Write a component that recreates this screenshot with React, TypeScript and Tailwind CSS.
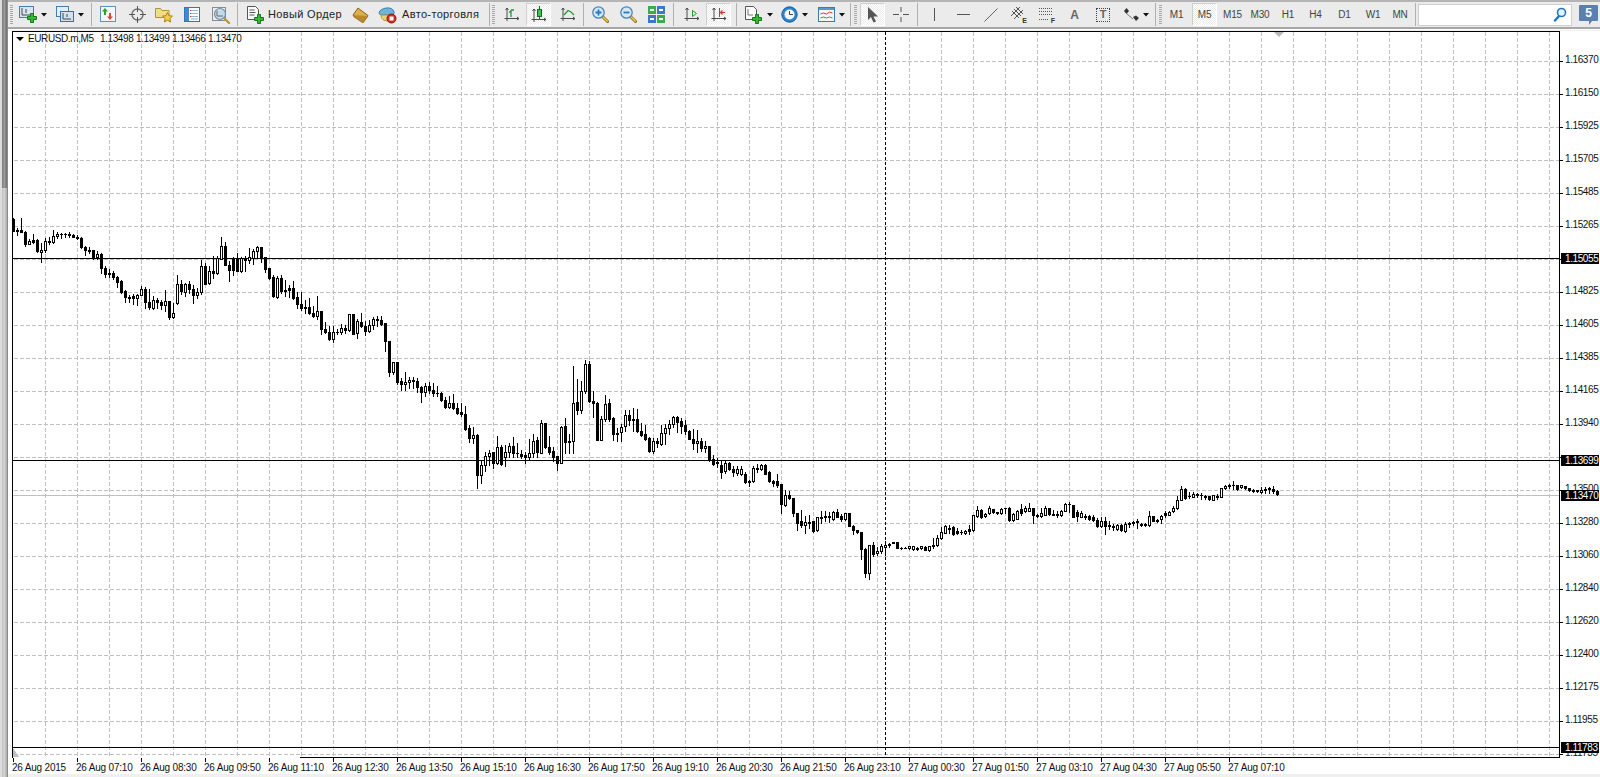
import React from "react";

type C = [number, number, number, number, number];
// [wick top, body top, body bottom, wick bottom, white?]  measured at 3x from y0
const segA: C[] = [[55,58,95,95,0],[85,91,95,107,0],[55,91,98,98,0],[95,96,135,140,0],[118,124,133,135,1],[103,122,127,132,0],[118,120,155,158,0],[130,152,158,188,1],[115,124,152,158,1],[113,124,129,133,0],[90,108,128,130,1],[98,103,110,116,1],[100,104,105,115,0],[100,104,105,113,0],[97,103,106,113,0],[103,105,112,113,0],[107,111,117,120,0],[113,115,143,145,0],[140,142,152,166,0],[143,150,154,160,0],[150,151,176,178,0],[155,162,173,178,1],[160,162,206,220,0],[200,204,225,233,0],[208,220,225,232,0],[215,219,233,238,0],[230,232,248,263,0],[240,243,278,280,0],[272,274,293,308,0],[285,291,296,308,0],[283,290,296,315,0],[283,287,296,318,1],[258,267,287,288,1],[262,267,307,325,0],[267,306,323,328,0],[290,301,325,328,1],[295,301,308,325,0],[300,307,317,328,0],[270,304,316,335,1],[303,304,353,358,0],[310,341,352,356,1],[225,252,312,314,1],[240,252,276,283,0],[250,252,278,290,1],[245,253,270,280,0],[255,267,287,312,0],[265,276,287,295,1],[180,198,278,285,1],[190,198,253,255,0],[200,214,252,254,1],[170,214,220,236,0],[170,176,221,224,1],[112,139,178,180,1],[128,139,197,198,0],[185,195,212,245,0],[172,175,212,228,0],[160,175,214,215,0],[172,175,214,218,1],[170,174,182,215,0],[145,172,183,190,1],[148,153,175,193,1],[140,142,155,175,1],[142,142,175,188,0],[172,172,210,218,0],[205,205,236,238,0],[225,233,291,292,0],[230,234,293,296,1],[225,234,276,280,0],[242,270,276,290,0],[255,266,272,292,0],[245,264,297,300,0],[278,293,313,325,0],[276,312,325,333,0],[300,322,327,342,0],[295,321,342,345,0],[320,340,351,352,0],[288,333,350,360,1],[333,333,390,403,0],[367,387,398,402,0],[378,396,420,423,0],[380,396,420,427,1],[388,396,398,405,0],[372,385,398,405,1],[375,385,393,402,0],[342,343,392,396,1],[342,344,403,405,0],[358,365,401,416,1],[340,367,380,382,0],[365,378,395,407,0],[362,376,395,398,1],[352,357,377,389,1],[350,358,361,380,0],[350,360,375,378,0],[370,371,426,455,0],[423,424,519,531,0],[486,486,519,525,1],[486,486,549,555,0]];
const segB: C[] = [[115,125,135,152,0],[98,127,135,152,1],[112,121,128,146,1],[112,120,125,147,0],[115,123,143,158,0],[140,141,158,188,0],[130,139,158,170,1],[128,138,152,160,0],[130,150,160,170,0],[140,160,162,170,0],[158,160,182,185,0],[172,180,203,205,0],[170,190,203,207,1],[162,190,206,208,0],[190,205,222,225,0],[190,218,225,230,0],[198,223,270,272,0],[255,264,297,308,0],[262,286,296,310,1],[284,285,407,447,0],[363,375,407,432,1],[338,349,376,395,1],[332,339,350,376,1],[336,336,372,386,0],[288,322,372,375,1],[316,322,373,378,0],[316,336,353,380,1],[310,318,339,352,1],[292,318,341,354,0],[310,339,341,353,0],[330,342,350,357,0],[338,346,352,372,0],[297,340,353,358,1],[284,304,341,352,1],[292,302,338,352,0],[240,249,340,342,1],[250,250,323,325,0],[288,322,338,345,0],[323,333,352,365,0],[348,349,370,393,0],[258,261,371,372,1],[235,258,308,340,0],[282,303,308,340,0],[78,190,305,340,1],[118,188,212,225,0],[125,153,212,222,1],[60,73,155,162,1],[65,72,185,187,0],[155,184,191,233,0],[188,190,302,303,0],[230,238,302,303,1],[165,192,240,245,1],[178,189,238,245,0],[232,234,285,303,0],[265,280,283,306,0],[252,262,278,305,1],[210,226,260,276,1],[212,226,243,258,0],[205,237,242,275,0],[208,237,276,278,0],[250,274,287,289,0],[255,282,300,302,0],[292,294,336,338,0],[295,303,336,342,1],[295,304,310,322,0],[255,280,313,316,1],[253,264,282,314,1],[242,252,267,285,1],[228,231,254,264,1],[228,231,248,278,0],[235,243,261,280,0],[242,255,275,285,0],[272,273,298,300,0],[268,298,312,330,0],[270,304,312,338,1],[295,303,326,335,0],[305,318,326,338,1],[318,318,362,365,0],[345,357,374,376,0],[355,368,370,382,0],[365,376,397,415,0],[360,371,395,400,1],[367,371,388,393,0],[380,388,398,410,0],[378,388,400,408,1],[380,387,404,408,1],[398,402,428,430,0],[422,424,427,440,0],[380,384,425,427,1],[372,384,388,398,0],[372,375,388,392,1],[372,375,403,405,0],[395,398,425,427,0],[420,424,430,440,0],[403,423,437,443,0],[432,433,493,520,0]];
const segC: C[] = [[150,167,197,200,1],[153,167,175,180,0],[175,175,221,230,0],[220,220,250,272,0],[210,244,258,262,0],[228,247,257,282,1],[225,246,250,265,0],[245,245,275,278,0],[232,233,273,275,1],[213,232,236,250,0],[213,230,233,245,0],[218,228,233,248,0],[215,216,240,242,1],[208,216,232,234,0],[224,229,240,246,0],[219,221,240,242,1],[220,220,260,261,0],[257,258,272,285,0],[270,272,279,280,0],[277,277,330,360,0],[325,327,402,413,0],[315,316,402,420,1],[307,316,343,350,0],[322,335,342,348,1],[313,319,335,340,1],[305,317,322,347,1],[310,314,317,322,0],[308,308,312,312,0],[307,307,326,327,0],[323,325,327,330,0],[322,324,325,326,0],[318,319,326,330,1],[318,320,328,333,1],[322,325,329,333,0],[318,320,326,330,1],[320,322,331,333,0],[318,319,332,334,1],[295,315,320,325,0],[285,296,318,320,1],[262,276,297,300,1],[255,260,280,282,1],[256,264,268,280,0],[258,262,284,286,0],[265,275,281,283,0],[272,276,279,285,0],[271,275,280,283,1],[255,267,275,283,0],[225,226,272,275,1],[198,211,229,232,1],[208,211,232,235,0],[220,222,230,232,1],[200,206,222,224,1],[207,207,218,222,0],[217,218,220,224,0],[205,207,221,223,1],[205,206,207,220,0],[203,205,243,244,0],[220,222,243,244,1],[212,214,238,240,1],[193,208,222,226,0],[198,205,216,218,1],[190,204,214,216,1],[205,205,227,252,0],[223,226,230,232,0],[205,220,230,234,1],[200,206,226,228,1],[205,206,224,226,0],[210,222,226,228,0],[215,222,226,232,0],[210,215,228,230,1],[190,192,215,216,1],[187,192,195,218,0],[196,197,232,234,0],[210,218,230,244,0],[215,220,232,234,1],[222,228,232,238,0],[225,228,240,242,0],[226,232,242,245,0],[236,240,260,262,0],[233,244,260,262,1],[232,244,260,285,0],[245,255,260,270,0],[254,258,262,272,0],[254,256,270,272,1],[254,256,272,274,0],[248,252,274,278,1],[246,250,255,262,0],[243,246,250,257,0],[238,243,248,266,0],[250,254,256,260,0],[250,254,256,260,0],[215,230,257,259,1],[228,229,244,246,0],[238,240,245,248,1]];
const segD: C[] = [[225,228,238,250,1],[215,220,226,232,0],[215,217,226,228,1],[200,205,214,218,1],[168,180,206,208,1],[140,148,181,182,1],[145,147,175,178,0],[158,168,171,175,0],[158,162,172,174,1],[160,163,168,174,0],[160,165,168,178,0],[165,168,172,180,0],[168,170,180,182,0],[165,167,181,182,1],[162,168,172,180,0],[145,146,172,174,1],[137,140,147,150,1],[132,136,140,147,0],[125,135,138,150,0],[135,136,148,152,0],[137,137,142,145,1],[138,140,146,148,0],[145,146,153,155,0],[148,152,155,158,0],[150,152,155,158,0],[142,150,157,160,1],[142,148,151,162,0],[142,146,149,160,0],[138,148,154,160,0],[152,153,165,166,0]];

const toCandles = () => {
  const out: { i: number; t: number; a: number; b: number; l: number; w: number }[] = [];
  const add = (seg: C[], y0: number, start: number) =>
    seg.forEach((c, k) =>
      out.push({
        i: start + k,
        t: y0 + Math.floor(c[0] / 3),
        a: y0 + Math.floor(c[1] / 3),
        b: y0 + Math.ceil(c[2] / 3),
        l: y0 + Math.ceil(c[3] / 3),
        w: c[4],
      })
    );
  add(segA, 200, 0);
  add(segB, 340, 97);
  add(segC, 440, 193);
  add(segD, 440, 287);
  return out;
};
const candles = toCandles();

const priceRows = ["1.16370","1.16150","1.15925","1.15705","1.15485","1.15265","","1.14825","1.14605","1.14385","1.14165","1.13940","","1.13500","1.13280","1.13060","1.12840","1.12620","1.12400","1.12175","1.11955","1.11735"];
const gridY = [61,94,127,160,193,226,259,292,325,358,391,424,457,490,523,556,589,622,655,688,721,754];
const gridX = Array.from({ length: 48 }, (_, i) => 45 + 32 * i);
const tags = [
  { y: 258, t: "1.15055" },
  { y: 460, t: "1.13699" },
  { y: 495, t: "1.13470" },
  { y: 747, t: "1.11783" },
];
const timeLabels = ["26 Aug 2015","26 Aug 07:10","26 Aug 08:30","26 Aug 09:50","26 Aug 11:10","26 Aug 12:30","26 Aug 13:50","26 Aug 15:10","26 Aug 16:30","26 Aug 17:50","26 Aug 19:10","26 Aug 20:30","26 Aug 21:50","26 Aug 23:10","27 Aug 00:30","27 Aug 01:50","27 Aug 03:10","27 Aug 04:30","27 Aug 05:50","27 Aug 07:10"];

const Chart = () => (
  <svg width={1552} height={731} viewBox="12 31 1552 731" className="block shrink-0" shapeRendering="crispEdges">
    {gridY.map((y) => (
      <line key={y} x1={14} x2={1559} y1={y + 0.5} y2={y + 0.5} stroke="#c0c0c0" strokeDasharray="4 2" />
    ))}
    {gridX.map((x) => (
      <line key={x} x1={x + 0.5} x2={x + 0.5} y1={32} y2={757} stroke="#c0c0c0" strokeDasharray="4 2" />
    ))}
    <rect x={13} y={495} width={1546} height={1} fill="#c0c0c0" />
    {[258, 460, 747].map((y) => (
      <rect key={y} x={13} y={y} width={1546} height={1} fill="#000" />
    ))}
    {candles.map((c) => {
      const x = 13 + 4 * c.i;
      const h = Math.max(1, c.b - c.a);
      return (
        <g key={c.i}>
          <rect x={x} y={c.t} width={1} height={Math.max(1, c.l - c.t)} fill="#000" />
          {c.w ? (
            <rect x={x - 0.5} y={c.a + 0.5} width={2} height={Math.max(1, h - 1)} fill="#fff" stroke="#000" />
          ) : (
            <rect x={x - 1} y={c.a} width={3} height={h} fill="#000" />
          )}
        </g>
      );
    })}
    <line x1={885.5} x2={885.5} y1={32} y2={757} stroke="#000" strokeDasharray="3 2" />
    <rect x={12} y={31} width={1548} height={1} fill="#000" />
    <rect x={12} y={31} width={1} height={727} fill="#000" />
    <rect x={1559} y={31} width={1} height={727} fill="#000" />
    <rect x={300} y={757} width={1260} height={1} fill="#000" />
    <polygon points="1274,32 1284,32 1279,37" fill="#b8b8b8" shapeRendering="auto" />
    <polygon points="13,748 13,757 19,757" fill="#c0c0c0" shapeRendering="auto" />
    <polygon points="16,37 24,37 20,41" fill="#000" shapeRendering="auto" />
    {gridY.map((y) => (
      <rect key={y} x={1560} y={y} width={3} height={1} fill="#000" />
    ))}
    {timeLabels.map((_, i) => (
      <rect key={i} x={13 + 64 * i} y={758} width={1} height={4} fill="#000" />
    ))}
  </svg>
);

const Sep = ({ className = "" }: { className?: string }) => <div className={`h-[23px] w-px bg-[#b0b0b0] shrink-0 ${className}`} />;
const Grip = ({ className = "" }: { className?: string }) => (
  <div className={`h-[20px] w-[3px] shrink-0 bg-[repeating-linear-gradient(to_bottom,#a8a8a8_0px,#a8a8a8_1px,transparent_1px,transparent_2px)] ${className}`} />
);
const Caret = ({ className = "" }: { className?: string }) => (
  <svg width={6} height={4} viewBox="0 0 6 4" className={`shrink-0 mt-px ${className}`}>
    <polygon points="0,0 6,0 3,3.5" fill="#111" />
  </svg>
);
const Pressed = ({ className = "", children }: { className?: string; children: React.ReactNode }) => (
  <div className={`h-[23px] shrink-0 flex items-center justify-center border border-t-[#cfcfcf] border-l-[#cfcfcf] border-r-white border-b-white bg-[repeating-conic-gradient(#ececec_0%_25%,#ffffff_0%_50%)] bg-size-[2px_2px] ${className}`}>
    {children}
  </div>
);
const Plus = ({ x = 8, y = 8 }: { x?: number; y?: number }) => (
  <path transform={`translate(${x} ${y})`} d="M3.5.5h3v3h3v3h-3v3h-3v-3h-3v-3h3z" fill="#35b935" stroke="#157a15" strokeWidth="1" />
);
const Axes = () => (
  <path d="M3 1v13M0.5 11.5H15M1.5 3 3 1l1.5 2M13 10l2 1.5-2 1.5" fill="none" stroke="#4a4a4a" strokeWidth="1" />
);
const Mag = ({ sign, className = "" }: { sign: "+" | "-"; className?: string }) => (
  <svg width={17} height={17} viewBox="0 0 17 17" className={`shrink-0 ${className}`}>
    <path d="M10.5 10.5 15.5 15.5" stroke="#8a6a10" strokeWidth="3" strokeLinecap="round" />
    <path d="M10.8 10.8 15.3 15.3" stroke="#f0d050" strokeWidth="1.4" strokeLinecap="round" />
    <circle cx="6.5" cy="6.5" r="5.7" fill="#d3e8f7" stroke="#4e85b4" strokeWidth="1.3" />
    <path d={sign === "+" ? "M3.5 6.5h6M6.5 3.5v6" : "M3.5 6.5h6"} stroke="#2a7ab8" strokeWidth="1.8" />
  </svg>
);

const TF = ({ className, children }: { className: string; children: string }) => (
  <div className={`shrink-0 h-[23px] flex items-center justify-center text-[10px] tracking-[-0.2px] text-[#444] ${className}`}>{children}</div>
);

const Toolbar = () => (
  <div className="h-[30px] shrink-0 flex flex-col bg-white">
    <div className="h-[2px] bg-[#b4b4b4]" />
    <div className="h-[25px] flex items-center bg-[#ebebeb]">
      <Grip className="ml-[2px]" />
      <svg width={18} height={17} viewBox="0 0 18 17" className="ml-[6px] shrink-0">
        <rect x=".5" y=".5" width="14" height="11" fill="#d8e6f3" stroke="#4a7ca8" />
        <path d="M3 2v7h8M7 3v4" stroke="#444" fill="none" />
        <Plus x={8} y={7} />
      </svg>
      <Caret className="ml-[4px]" />
      <svg width={18} height={17} viewBox="0 0 18 17" className="ml-[9px] shrink-0">
        <rect x=".5" y=".5" width="12" height="10" fill="#e4edf6" stroke="#4a7ca8" />
        <rect x="4.5" y="5.5" width="13" height="10" fill="#d3e2f1" stroke="#3c6f9e" />
        <path d="M7 7v6h8M11 8v3" stroke="#444" fill="none" />
      </svg>
      <Caret className="ml-[4px]" />
      <Sep className="ml-[7px]" />
      <svg width={17} height={17} viewBox="0 0 17 17" className="ml-[8px] shrink-0">
        <rect x=".5" y=".5" width="15" height="15" fill="#f3f7fb" stroke="#5d92c2" />
        <path d="M5 2 8 5.5H6V9H4V5.5H2z" fill="#28a428" />
        <path d="M10 14l-3-3.5h2V7h2v3.5h2z" fill="#d84a2a" />
      </svg>
      <svg width={17} height={17} viewBox="0 0 17 17" className="ml-[12px] shrink-0">
        <circle cx="8.5" cy="8.5" r="5.5" fill="none" stroke="#6f6f6f" strokeWidth="1.4" />
        <path d="M8.5 0v6M8.5 11v6M0 8.5h6M11 8.5h6" stroke="#555" />
      </svg>
      <svg width={18} height={17} viewBox="0 0 18 17" className="ml-[9px] shrink-0">
        <path d="M.5 2.5h5l1.5 2h7v7H.5z" fill="#f3d98b" stroke="#b8912f" />
        <path d="M12.5 6.5l1.5 3.2 3.5.4-2.6 2.4.7 3.5-3.1-1.8-3.1 1.8.7-3.5-2.6-2.4 3.5-.4z" fill="#f5cf45" stroke="#a98318" />
      </svg>
      <svg width={17} height={17} viewBox="0 0 17 17" className="ml-[11px] shrink-0">
        <rect x=".5" y="1.5" width="15" height="14" fill="#fdfdfd" stroke="#2f78b5" />
        <rect x="1" y="2" width="4" height="13" fill="#3f8ccc" />
        <path d="M7 4.5h7M7 7.5h7M7 10.5h7M7 13h7" stroke="#8db4d6" />
        <path d="M6 4.5h1M6 7.5h1M6 10.5h1" stroke="#c33" />
      </svg>
      <svg width={19} height={18} viewBox="0 0 19 18" className="ml-[11px] shrink-0">
        <rect x=".5" y="1.5" width="13" height="13" fill="#ececec" stroke="#8c8c8c" />
        <path d="M12 12l5 5" stroke="#c09a28" strokeWidth="2.4" strokeLinecap="round" />
        <circle cx="8" cy="8" r="5.5" fill="#bcd7ea" fillOpacity=".85" stroke="#6d8faa" strokeWidth="1.2" />
        <path d="M5 5v5h6" stroke="#6a6a6a" fill="none" />
      </svg>
      <Sep className="ml-[6px]" />
      <svg width={17} height={18} viewBox="0 0 17 18" className="ml-[9px] shrink-0">
        <path d="M.5.5h8l3 3v10H.5z" fill="#fbfbfb" stroke="#555" />
        <path d="M2.5 4h5M2.5 6.5h6M2.5 9h5" stroke="#555" />
        <Plus x={7} y={8} />
      </svg>
      <div className="ml-[4px] w-[74px] shrink-0 text-[11px] tracking-[0.35px] text-[#222] whitespace-nowrap">Новый Ордер</div>
      <svg width={17} height={16} viewBox="0 0 17 16" className="ml-[10px] shrink-0">
        <path d="M6 1 16 8.5 11 15 1 8z" fill="#dcae50" stroke="#8b641a" />
        <path d="M1 8l1 2 9 6 5-7" fill="#b98a2c" stroke="#8b641a" strokeWidth=".7" />
      </svg>
      <svg width={19} height={18} viewBox="0 0 19 18" className="ml-[9px] shrink-0">
        <path d="M1 7c0-5 14-8 15-1 1 3-3 3-7 3S1 9 1 7z" fill="#6fb4dd" stroke="#3a7fae" />
        <path d="M3 9c0 4 3 6 7 6s5-2 5-6z" fill="#f0cf72" stroke="#b8922f" />
        <circle cx="13.5" cy="12.5" r="4.5" fill="#d62b1e" stroke="#8e150d" />
        <rect x="11.5" y="10.5" width="4" height="4" fill="#fff" />
      </svg>
      <div className="ml-[5px] w-[78px] shrink-0 text-[11px] tracking-[0.35px] text-[#222] whitespace-nowrap">Авто-торговля</div>
      <Sep className="ml-[9px]" />
      <Grip className="ml-[2px]" />
      <svg width={15} height={15} viewBox="0 0 15 15" className="ml-[9px] shrink-0">
        <Axes />
        <path d="M7 10V3M7 5H5M7 3h3" stroke="#1f9a2e" strokeWidth="1.3" fill="none" />
      </svg>
      <Pressed className="ml-[7px] w-[25px]">
        <svg width={15} height={17} viewBox="0 0 15 17">
          <g transform="translate(0 2)"><Axes /></g>
          <rect x="6.5" y="3.5" width="4" height="7" fill="#3cc24a" stroke="#176b20" />
          <path d="M8.5 0v3.5M8.5 10.5V13" stroke="#176b20" />
        </svg>
      </Pressed>
      <svg width={15} height={15} viewBox="0 0 15 15" className="ml-[9px] shrink-0">
        <Axes />
        <path d="M4 8 8 3.5l3 1.5 3 3" stroke="#1f9a2e" strokeWidth="1.2" fill="none" />
      </svg>
      <Sep className="ml-[8px]" />
      <Mag sign="+" className="ml-[8px]" />
      <Mag sign="-" className="ml-[11px]" />
      <svg width={17} height={17} viewBox="0 0 17 17" className="ml-[11px] shrink-0">
        <rect width="8" height="8" fill="#3cab4c" />
        <rect x="9" width="8" height="8" fill="#3a78c8" />
        <rect y="9" width="8" height="8" fill="#3a78c8" />
        <rect x="9" y="9" width="8" height="8" fill="#3cab4c" />
        <path d="M2 3h4v2H2zM11 3h4v2h-4zM2 12h4v2H2zM11 12h4v2h-4z" fill="#fff" />
      </svg>
      <Sep className="ml-[8px]" />
      <svg width={15} height={15} viewBox="0 0 15 15" className="ml-[10px] shrink-0">
        <Axes />
        <path d="M8.5 3.5v6l4-3z" fill="#dff5df" stroke="#1f9a2e" />
      </svg>
      <Pressed className="ml-[7px] w-[25px]">
        <svg width={15} height={15} viewBox="0 0 15 15">
          <Axes />
          <path d="M8.5 1v9" stroke="#2b6cb0" />
          <path d="M14 5.5H11V3.5L9 5.5l2 2v-2" fill="#d9381e" stroke="#d9381e" />
        </svg>
      </Pressed>
      <Sep className="ml-[5px]" />
      <svg width={17} height={18} viewBox="0 0 17 18" className="ml-[8px] shrink-0">
        <path d="M.5.5h8l3 3v10H.5z" fill="#fbfbfb" stroke="#555" />
        <path d="M3 3v6h5" stroke="#777" fill="none" />
        <Plus x={7} y={8} />
      </svg>
      <Caret className="ml-[5px]" />
      <svg width={17} height={17} viewBox="0 0 17 17" className="ml-[8px] shrink-0">
        <circle cx="8.5" cy="8.5" r="7.7" fill="#2a85cf" stroke="#155a96" />
        <circle cx="8.5" cy="8.5" r="5" fill="#f7f7f7" />
        <path d="M8.5 5v3.5H12" stroke="#444" fill="none" />
      </svg>
      <Caret className="ml-[4px]" />
      <svg width={17} height={15} viewBox="0 0 17 15" className="ml-[10px] shrink-0">
        <rect x=".5" y=".5" width="16" height="14" fill="#f6f9fc" stroke="#3f79ad" />
        <rect x="1" y="1" width="15" height="2" fill="#5b97cc" />
        <path d="M2.5 7l3-1 3 1 3-2 3 1" stroke="#d43b2a" fill="none" />
        <path d="M2.5 11l3-1 3 1 3-1 3 1" stroke="#2d9e3b" fill="none" />
      </svg>
      <Caret className="ml-[4px]" />
      <Sep className="ml-[5px]" />
      <Grip className="ml-[3px]" />
      <Pressed className="ml-[3px] w-[25px]">
        <svg width={12} height={16} viewBox="0 0 12 16">
          <path d="M1 0v13l3-3 2.5 5.5 2.5-1-2.5-5H11z" fill="#555" />
        </svg>
      </Pressed>
      <svg width={16} height={15} viewBox="0 0 16 15" className="ml-[8px] shrink-0">
        <path d="M8 0v5M8 10v5M0 7.5h6M10 7.5h6" stroke="#555" />
      </svg>
      <Sep className="ml-[8px]" />
      <svg width={3} height={13} viewBox="0 0 3 13" className="ml-[15px] shrink-0">
        <path d="M1.5 0v13" stroke="#555" />
      </svg>
      <svg width={13} height={3} viewBox="0 0 13 3" className="ml-[21px] shrink-0">
        <path d="M0 1.5h13" stroke="#555" />
      </svg>
      <svg width={14} height={14} viewBox="0 0 14 14" className="ml-[14px] shrink-0">
        <path d="M.5 13.5 13.5.5" stroke="#666" />
      </svg>
      <div className="ml-[12px] w-[17px] h-[18px] shrink-0 relative">
        <svg width={15} height={15} viewBox="0 0 15 15" className="block">
          <path d="M1 10 10 1M4 13 13 4M2 5l7 7M4 3l7 7M6 1l7 7" stroke="#555" fill="none" />
        </svg>
        <span className="absolute right-0 bottom-0 text-[7px] leading-[7px] font-bold text-[#333]">E</span>
      </div>
      <div className="ml-[12px] w-[16px] h-[18px] shrink-0 relative">
        <svg width={13} height={15} viewBox="0 0 13 15" className="block">
          <path d="M0 2.5h13M0 5.5h13M0 8.5h13M0 13.5h9" stroke="#555" strokeDasharray="1 1" />
        </svg>
        <span className="absolute right-0 bottom-0 text-[7px] leading-[7px] font-bold text-[#333]">F</span>
      </div>
      <div className="ml-[15px] w-[9px] shrink-0 text-[12px] font-bold leading-none text-[#666] text-center">A</div>
      <div className="ml-[17px] w-[14px] h-[14px] shrink-0 border border-dotted border-[#444] flex items-center justify-center text-[11px] font-bold leading-none text-[#666]">T</div>
      <svg width={15} height={14} viewBox="0 0 15 14" className="ml-[14px] shrink-0">
        <path d="M0 3l2.5-3L5 3l-2.5 3zM9 9l3-1.5L15 10l-3 3z" fill="#333" />
        <path d="M3 6l6 5" stroke="#777" />
      </svg>
      <Caret className="ml-[4px]" />
      <Sep className="ml-[6px]" />
      <Grip className="ml-[3px]" />
      <TF className="ml-px w-[27px]">M1</TF>
      <Pressed className="ml-[2px] w-[25px] text-[10px] tracking-[-0.2px] text-[#444]">M5</Pressed>
      <TF className="ml-[2px] w-[27px]">M15</TF>
      <TF className="w-[28px]">M30</TF>
      <TF className="w-[28px]">H1</TF>
      <TF className="w-[27px]">H4</TF>
      <TF className="w-[31px]">D1</TF>
      <TF className="w-[26px]">W1</TF>
      <TF className="w-[28px]">MN</TF>
      <Sep className="ml-px" />
      <div className="ml-[2px] w-[154px] h-[22px] shrink-0 bg-white border border-[#cfcfcf] flex items-center justify-end pr-[4px]">
        <svg width={14} height={15} viewBox="0 0 14 15">
          <path d="M6 9 2 13.5" stroke="#2474c4" strokeWidth="2.4" strokeLinecap="round" />
          <circle cx="8.5" cy="5.5" r="4" fill="#e6f2fb" stroke="#2474c4" strokeWidth="1.6" />
        </svg>
      </div>
      <div className="ml-[7px] w-[19px] h-[20px] shrink-0 relative">
        <svg width={19} height={20} viewBox="0 0 19 20" className="block">
          <path d="M1 0h17a1 1 0 0 1 1 1v14a1 1 0 0 1-1 1h-5l-3 4v-4H1a1 1 0 0 1-1-1V1a1 1 0 0 1 1-1z" fill="#5a7fb0" />
        </svg>
        <span className="absolute left-0 right-0 top-[2px] text-center text-[12px] leading-[12px] font-bold text-white">5</span>
      </div>
    </div>
    <div className="h-[2px] bg-[#a6a6a6]" />
    <div className="h-px bg-white" />
  </div>
);

export default function App() {
  return (
    <div className="w-[1600px] h-[777px] overflow-hidden flex bg-[#f0f0f0] font-['Liberation_Sans',sans-serif]">
      <div className="w-[8px] shrink-0 flex flex-col border-l-2 border-[#dcdcdc] border-r border-r-[#8a8a8a]">
        <div className="h-[188px] bg-[linear-gradient(to_right,#7c7c7c,#9a9a9a,#6c6c6c)]" />
        <div className="flex-1 bg-[linear-gradient(to_right,#c4c4c4,#d0d0d0,#a8a8a8)]" />
      </div>
      <div className="flex-1 flex flex-col min-w-0">
        <Toolbar />
        <div className="relative flex-1 flex flex-col bg-white mt-px">
          <div className="flex pl-[4px]">
            <Chart />
            <div className="relative flex-1">
              {priceRows.map((p, i) =>
                p ? (
                  <div
                    key={p}
                    className="absolute left-[1px] h-[12px] leading-[12px] text-[10px] tracking-[-0.4px] text-[#111]"
                    style={{ top: gridY[i] - 31 - 7 }}
                  >
                    {p}
                  </div>
                ) : null
              )}
              {tags.map((t) => (
                <div
                  key={t.y}
                  className="absolute -left-[3px] w-[38px] h-[11px] pl-[4px] bg-black leading-[11px] text-[10px] tracking-[-0.4px] text-white"
                  style={{ top: t.y - 31 - 5 }}
                >
                  {t.t}
                </div>
              ))}
            </div>
            <div className="absolute left-[20px] top-[2px] flex text-[10px] leading-[12px] tracking-[-0.4px] text-[#111] whitespace-nowrap">
              <span className="w-[72px]">EURUSD.m,M5</span>
              <span className="w-[36px]">1.13498</span>
              <span className="w-[36px]">1.13499</span>
              <span className="w-[36px]">1.13466</span>
              <span>1.13470</span>
            </div>
          </div>
          <div className="flex pl-[4px] h-[12px] items-center">
            {timeLabels.map((t) => (
              <div key={t} className="w-[64px] shrink-0 text-[10px] leading-[12px] tracking-[-0.2px] text-[#111] whitespace-nowrap">{t}</div>
            ))}
          </div>
          <div className="flex-1 bg-[#f0f0f0]" />
        </div>
      </div>
    </div>
  );
}
